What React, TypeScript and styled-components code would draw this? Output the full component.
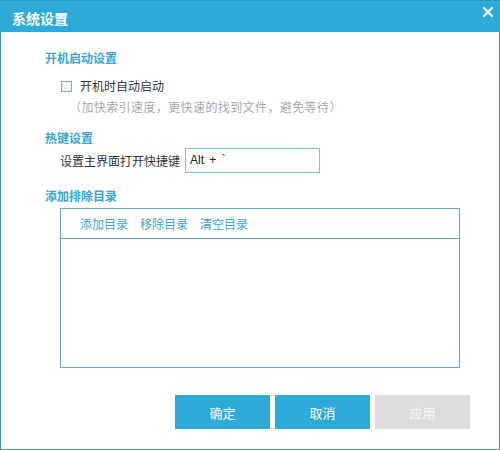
import React from 'react';
import styled, {createGlobalStyle} from 'styled-components';

const GlobalStyle = createGlobalStyle`
  html, body {
    margin: 0;
    padding: 0;
    background: #fff;
  }
  body {
    font-family: "Noto Sans CJK SC", "Noto Sans", "Liberation Sans", sans-serif;
    font-size: 12px;
    color: #333;
  }
`;

const Window = styled.div`
  width: 500px;
  height: 450px;
  box-sizing: border-box;
  border: 1px solid #3b8fb0;
  border-top: none;
  display: flex;
  flex-direction: column;
  background: #fff;
`;

const TitleBar = styled.div`
  height: 32px;
  margin: 0 -1px;
  background: #2eaad8;
  display: flex;
  align-items: center;
  justify-content: space-between;
  padding: 0 6px 0 12px;
  border-top: 1px solid #2a98c4;
  box-sizing: border-box;
`;

const Title = styled.div`
  color: #fff;
  font-size: 14px;
  font-weight: bold;
  line-height: 20px;
  margin-top: 2px;
`;

const CloseButton = styled.div`
  align-self: flex-start;
  margin-top: 5px;
  width: 12px;
  height: 12px;
  display: flex;
  cursor: pointer;
`;

const Body = styled.div`
  flex: 1;
  padding: 17px 0 0 44px;
  display: flex;
  flex-direction: column;
`;

const SectionTitle = styled.div<{$top?: number}>`
  font-weight: bold;
  color: #3ba3cc;
  line-height: 18px;
  margin-top: ${p => p.$top ?? 0}px;
`;

const CheckRow = styled.label`
  display: flex;
  align-items: center;
  gap: 8px;
  margin: 10px 0 0 16px;
  line-height: 18px;
  color: #333;
`;

const CheckBox = styled.span`
  width: 11px;
  height: 11px;
  box-sizing: border-box;
  border: 1px solid #8da4b8;
  background: #eef4fa;
`;

const Hint = styled.div`
  margin: 3px 0 0 24px;
  line-height: 18px;
  letter-spacing: 0.4px;
  color: #a8a8a8;
`;

const HotkeyRow = styled.div`
  display: flex;
  align-items: center;
  margin: 1px 0 0 15px;
  gap: 5px;
`;

const HotkeyInput = styled.div`
  width: 135px;
  height: 25px;
  box-sizing: border-box;
  border: 1px solid #7fbfd6;
  padding: 0 4px;
  line-height: 23px;
  font-family: "Liberation Sans", Arial, sans-serif;
  font-size: 12px;
  word-spacing: 2px;
  color: #222;
`;

const ListBox = styled.div`
  margin: 3px 0 0 15px;
  width: 400px;
  height: 160px;
  box-sizing: border-box;
  border: 1px solid #5fa6c2;
  display: flex;
  flex-direction: column;
`;

const ListToolbar = styled.div`
  height: 29px;
  border-bottom: 1px solid #5fa6c2;
  display: flex;
  align-items: center;
  gap: 12px;
  padding: 0 0 0 19px;
`;

const ToolLink = styled.span`
  color: #3ba3cc;
  cursor: pointer;
`;

const Footer = styled.div`
  display: flex;
  justify-content: flex-end;
  gap: 5px;
  margin: 27px 29px 0 0;
`;

const Button = styled.button<{$disabled?: boolean}>`
  width: 95px;
  height: 34px;
  border: none;
  padding: 0;
  font-family: inherit;
  font-size: 13px;
  color: ${p => (p.$disabled ? '#f6f6f6' : '#fff')};
  background: ${p => (p.$disabled ? '#dddddd' : '#2eaad8')};
  cursor: ${p => (p.$disabled ? 'default' : 'pointer')};
`;

export default function App() {
  return (
    <>
      <GlobalStyle />
      <Window>
        <TitleBar>
          <Title>系统设置</Title>
          <CloseButton>
            <svg width="12" height="12" viewBox="0 0 12 12">
              <path d="M1.5 1.5 L10.5 10.5 M10.5 1.5 L1.5 10.5" stroke="#fff" strokeWidth="2.2" />
            </svg>
          </CloseButton>
        </TitleBar>
        <Body>
          <SectionTitle>开机启动设置</SectionTitle>
          <CheckRow>
            <CheckBox />
            开机时自动启动
          </CheckRow>
          <Hint>（加快索引速度，更快速的找到文件，避免等待）</Hint>
          <SectionTitle $top={13}>热键设置</SectionTitle>
          <HotkeyRow>
            <span>设置主界面打开快捷键</span>
            <HotkeyInput>Alt + `</HotkeyInput>
          </HotkeyRow>
          <SectionTitle $top={14}>添加排除目录</SectionTitle>
          <ListBox>
            <ListToolbar>
              <ToolLink>添加目录</ToolLink>
              <ToolLink>移除目录</ToolLink>
              <ToolLink>清空目录</ToolLink>
            </ListToolbar>
          </ListBox>
          <Footer>
            <Button>确定</Button>
            <Button>取消</Button>
            <Button $disabled>应用</Button>
          </Footer>
        </Body>
      </Window>
    </>
  );
}
